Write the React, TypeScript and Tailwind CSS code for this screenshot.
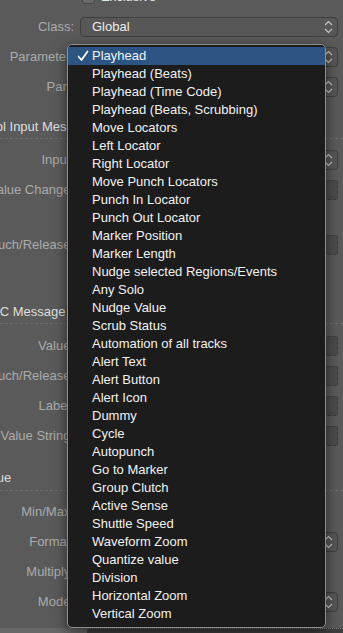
import React from "react";

/* ── small drawings ── */

function Chevrons() {
  return (
    <svg width="9" height="14" viewBox="0 0 9 14" className="shrink-0">
      <path d="M1 5 L4.5 1.5 L8 5" fill="none" stroke="#c8c8c8" strokeWidth="1.1" />
      <path d="M1 9 L4.5 12.5 L8 9" fill="none" stroke="#c8c8c8" strokeWidth="1.1" />
    </svg>
  );
}

function Check() {
  return (
    <svg width="12" height="12" viewBox="0 0 12 12">
      <path d="M1.5 6.5 L4.5 10 L10.5 1.5" fill="none" stroke="#ffffff" strokeWidth="1.7" strokeLinecap="round" strokeLinejoin="round" />
    </svg>
  );
}

/* ── inspector rows ── */

type Kind = "select" | "field" | "none";

function Row({ label, kind, value }: { label: string; kind: Kind; value?: string }) {
  return (
    <div className="flex h-[30px] items-center">
      <div className="flex w-[74px] shrink-0 justify-end">
        <span className="whitespace-nowrap text-[13px] text-[#ababab]">{label}</span>
      </div>
      <div className="ml-[6px] mr-[5px] flex-1">
        {kind === "select" && (
          <div className="flex h-[20px] items-center justify-between rounded-[4px] border border-[#3f3f3f] bg-[#575757] pl-[11px] pr-[4px]">
            <span className="text-[13px] text-[#ececec]">{value}</span>
            <Chevrons />
          </div>
        )}
        {kind === "field" && (
          <div className="h-[20px] rounded-[2px] border border-dashed border-[#3c3c3c] bg-[#4c4c4c]" />
        )}
      </div>
    </div>
  );
}

function Header({ title, shift, className }: { title: string; shift: string; className: string }) {
  return (
    <div className={className}>
      <div className={`whitespace-nowrap text-[13px] leading-[16px] text-[#dedede] ${shift}`}>{title}</div>
    </div>
  );
}

function Separator({ className }: { className: string }) {
  return <div className={`border-t border-dashed border-[#6c6c6c] ${className}`} />;
}

const items = [
  "Playhead",
  "Playhead (Beats)",
  "Playhead (Time Code)",
  "Playhead (Beats, Scrubbing)",
  "Move Locators",
  "Left Locator",
  "Right Locator",
  "Move Punch Locators",
  "Punch In Locator",
  "Punch Out Locator",
  "Marker Position",
  "Marker Length",
  "Nudge selected Regions/Events",
  "Any Solo",
  "Nudge Value",
  "Scrub Status",
  "Automation of all tracks",
  "Alert Text",
  "Alert Button",
  "Alert Icon",
  "Dummy",
  "Cycle",
  "Autopunch",
  "Go to Marker",
  "Group Clutch",
  "Active Sense",
  "Shuttle Speed",
  "Waveform Zoom",
  "Quantize value",
  "Division",
  "Horizontal Zoom",
  "Vertical Zoom",
];

export default function App() {
  return (
    <div className="relative h-[633px] w-[343px] overflow-hidden bg-[#5a5a5a] font-['Liberation_Sans',Arial,sans-serif]">
      {/* inspector */}
      <div className="-mt-[18px] flex flex-col">
        <div className="flex h-[30px] items-center pl-[82px]">
          <div className="h-[13px] w-[13px] rounded-[3px] border border-[#444] bg-[#6a6a6a]" />
          <span className="ml-[6px] text-[13px] text-[#e6e6e6]">Exclusive</span>
        </div>
        <Row label="Class:" kind="select" value="Global" />
        <Row label="Parameter:" kind="select" value="Playhead" />
        <Row label="Part:" kind="select" value="" />

        <Header title="Control Input Message" shift="-ml-[36px]" className="pt-[17px]" />
        <Separator className="mt-[3px] mb-[6px]" />
        <Row label="Input:" kind="select" value="" />
        <Row label="Value Change:" kind="field" />
        <div className="h-[25px]" />
        <Row label="Touch/Release:" kind="field" />

        <Header title="OSC Message" shift="-ml-[19px]" className="pt-[44px]" />
        <Separator className="mt-[3px] mb-[7px]" />
        <Row label="Value:" kind="field" />
        <Row label="Touch/Release:" kind="field" />
        <Row label="Label:" kind="field" />
        <Row label="Value String:" kind="field" />

        <Header title="Value" shift="-ml-[21px]" className="pt-[19px]" />
        <Separator className="mt-[4px] mb-[6px]" />
        <Row label="Min/Max:" kind="none" />
        <Row label="Format:" kind="select" value="" />
        <Row label="Multiply:" kind="none" />
        <Row label="Mode:" kind="select" value="" />

        <div className="mt-[11px] flex h-[6px]">
          <div className="w-[87px] bg-[#676767]" />
          <div className="flex-1 border-t border-dotted border-[#777] bg-[#3e3e3e]" />
        </div>
      </div>

      {/* popup menu */}
      <div className="absolute left-[67px] top-[44px] w-[259px] rounded-[5px] border border-[#8e8e8e] bg-[#1c1c1c] pt-[2px] pb-[4px] shadow-[0_4px_14px_rgba(0,0,0,0.55)]">
        {items.map((item, i) => (
          <div
            key={item}
            className={`flex h-[18px] items-center text-[13px] text-[#f2f2f2] ${i === 0 ? "bg-[#2c5584]" : ""}`}
          >
            <div className="flex w-[24px] justify-end pr-[3px]">{i === 0 && <Check />}</div>
            <span className="whitespace-nowrap">{item}</span>
          </div>
        ))}
      </div>
    </div>
  );
}
